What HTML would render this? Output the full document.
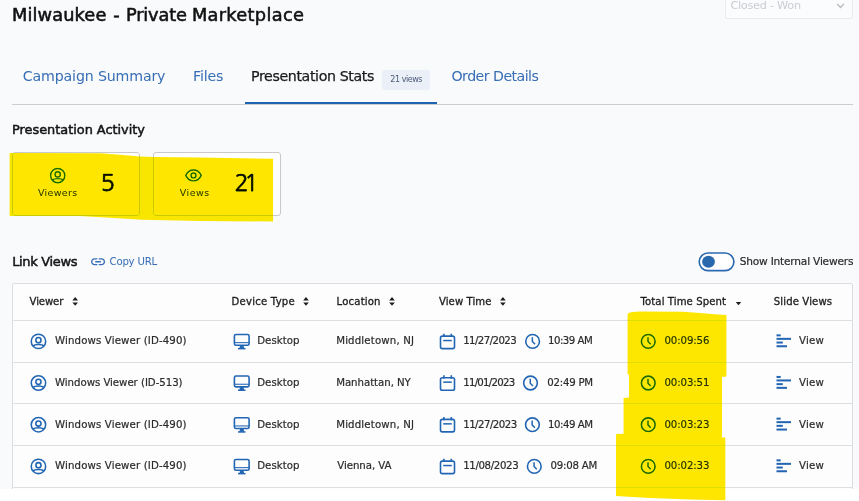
<!DOCTYPE html>
<html lang="en"><head><meta charset="utf-8"><title>Milwaukee - Private Marketplace</title>
<style>
html,body{margin:0;padding:0}
body{width:859px;height:501px;overflow:hidden;position:relative;background:#f9fafc;font-family:"DejaVu Sans","Liberation Sans",sans-serif;}
h1,h2,nav,.g{margin:0;padding:0;font-weight:normal;font-size:inherit;display:contents}
.t{position:absolute;line-height:20px;white-space:nowrap;font-weight:400}
.layer{position:absolute;left:0;top:0;pointer-events:none}
.bottom{position:absolute;left:0;top:489px;width:859px;height:13px;background:#fff}
.dd{position:absolute;left:725px;top:-6px;width:128px;height:24.5px;border:1px solid #e9ebee;border-radius:2px;background:#fbfcfe;box-sizing:border-box}
.tabline{position:absolute;left:12px;top:104px;width:841px;height:1px;background:#cbcdd1}
.tabactive{position:absolute;left:245px;top:102px;width:192px;height:2px;background:#1f64b3}
.badge{position:absolute;left:382.2px;top:70.2px;width:47.8px;height:19.5px;border-radius:2.5px;background:#ebf0f8}
.card{position:absolute;top:152px;width:128px;height:64px;border:1px solid #c9c9c9;border-radius:3px;background:#fff;box-sizing:border-box}
.tbl{position:absolute;left:12px;top:283px;width:841px;height:210px;border:1px solid #dddddf;border-radius:2px 2px 0 0;background:#fdfdfe;box-sizing:border-box}
.rl{position:absolute;left:13px;width:839px;height:1px;background:#dedfe2}
.hl{mix-blend-mode:darken}
</style></head>
<body>
<div class="dd"></div>
<span class="t" style="left:730.40px;top:-4px;font-size:11.3px;letter-spacing:-0.284px;color:#caccd0;">Closed - Won</span>
<h1><span class="t" style="left:12.00px;top:5px;font-size:17.8px;letter-spacing:0.108px;color:#111;-webkit-text-stroke:0.55px #111;">Milwaukee</span> <span class="t" style="left:113.20px;top:5px;font-size:17.8px;letter-spacing:0.000px;color:#111;-webkit-text-stroke:0.55px #111;">-</span> <span class="t" style="left:125.90px;top:5px;font-size:17.8px;letter-spacing:-0.159px;color:#111;-webkit-text-stroke:0.55px #111;">Private</span> <span class="t" style="left:191.90px;top:5px;font-size:17.8px;letter-spacing:0.308px;color:#111;-webkit-text-stroke:0.55px #111;">Marketplace</span></h1>
<div class="tabline"></div><div class="tabactive"></div>
<nav><span class="t" style="left:22.80px;top:66px;font-size:14.2px;letter-spacing:-0.162px;color:#376eb5;">Campaign Summary</span><span class="t" style="left:193.00px;top:66px;font-size:14.2px;letter-spacing:-0.185px;color:#376eb5;">Files</span><span class="t" style="left:251.00px;top:66px;font-size:14.2px;letter-spacing:-0.379px;color:#1a1a1a;-webkit-text-stroke:0.25px #1a1a1a;">Presentation Stats</span><i class="badge"></i><span class="t" style="left:390.30px;top:70px;font-size:8px;letter-spacing:-0.449px;color:#4b5a78;">21 views</span><span class="t" style="left:451.50px;top:66px;font-size:14.2px;letter-spacing:-0.552px;color:#376eb5;">Order Details</span></nav>
<h2><span class="t" style="left:12.10px;top:120px;font-size:12.9px;letter-spacing:-0.022px;color:#151515;-webkit-text-stroke:0.5px #151515;">Presentation Activity</span></h2>
<div class="card" style="left:12px"></div><div class="card" style="left:153px"></div>
<span class="t" style="left:37.90px;top:183px;font-size:9.5px;letter-spacing:0.334px;color:#333;-webkit-text-stroke:0.1px #333;">Viewers</span><span class="t" style="left:100.60px;top:172px;font-size:24px;letter-spacing:0.000px;color:#0c0c0c;-webkit-text-stroke:0.75px #0c0c0c;font-family:'NanumGothic',sans-serif;">5</span>
<span class="t" style="left:179.80px;top:183px;font-size:9.5px;letter-spacing:0.464px;color:#333;-webkit-text-stroke:0.1px #333;">Views</span><span class="t" style="left:234.40px;top:173px;font-size:23.5px;letter-spacing:-4.341px;color:#0c0c0c;-webkit-text-stroke:0.75px #0c0c0c;font-family:'NanumGothic',sans-serif;">21</span>
<h2><span class="t" style="left:12.20px;top:252px;font-size:13px;letter-spacing:-0.345px;color:#151515;-webkit-text-stroke:0.5px #151515;">Link Views</span></h2>
<span class="t" style="left:109.50px;top:252px;font-size:10.2px;letter-spacing:-0.231px;color:#376eb5;">Copy URL</span>
<span class="t" style="left:739.70px;top:251px;font-size:10.6px;letter-spacing:-0.198px;color:#2a2a2a;-webkit-text-stroke:0.2px #2a2a2a;">Show Internal Viewers</span>
<div class="tbl"></div>
<div class="rl" style="top:320px"></div>
<div class="rl" style="top:362px"></div>
<div class="rl" style="top:403px"></div>
<div class="rl" style="top:445px"></div>
<div class="rl" style="top:487px"></div>
<div class="g" role="row"><span class="t" style="left:29.60px;top:292px;font-size:10.1px;letter-spacing:-0.113px;color:#1c1c1c;-webkit-text-stroke:0.3px #1c1c1c;">Viewer</span><span class="t" style="left:231.50px;top:292px;font-size:10.1px;letter-spacing:0.230px;color:#1c1c1c;-webkit-text-stroke:0.3px #1c1c1c;">Device Type</span><span class="t" style="left:336.60px;top:292px;font-size:10.1px;letter-spacing:0.172px;color:#1c1c1c;-webkit-text-stroke:0.3px #1c1c1c;">Location</span><span class="t" style="left:439.00px;top:292px;font-size:10.1px;letter-spacing:0.068px;color:#1c1c1c;-webkit-text-stroke:0.3px #1c1c1c;">View Time</span><span class="t" style="left:640.50px;top:292px;font-size:10.1px;letter-spacing:0.092px;color:#1c1c1c;-webkit-text-stroke:0.3px #1c1c1c;">Total Time Spent</span><span class="t" style="left:773.80px;top:292px;font-size:10.1px;letter-spacing:0.121px;color:#1c1c1c;-webkit-text-stroke:0.3px #1c1c1c;">Slide Views</span></div>
<div class="g" role="row"><span class="t" style="left:55.00px;top:331px;font-size:10.2px;letter-spacing:0.140px;color:#2b2b2b;-webkit-text-stroke:0.2px #2b2b2b;">Windows Viewer (ID-490)</span><span class="t" style="left:257.20px;top:331px;font-size:10.2px;letter-spacing:0.042px;color:#2b2b2b;-webkit-text-stroke:0.2px #2b2b2b;">Desktop</span><span class="t" style="left:336.20px;top:331px;font-size:10.2px;letter-spacing:0.157px;color:#2b2b2b;-webkit-text-stroke:0.2px #2b2b2b;">Middletown, NJ</span><span class="t" style="left:463.20px;top:331px;font-size:10.2px;letter-spacing:-0.582px;color:#2b2b2b;-webkit-text-stroke:0.2px #2b2b2b;">11/27/2023</span><span class="t" style="left:548.00px;top:331px;font-size:10.2px;letter-spacing:-0.509px;color:#2b2b2b;-webkit-text-stroke:0.2px #2b2b2b;">10:39 AM</span><span class="t" style="left:664.40px;top:331px;font-size:10.2px;letter-spacing:-0.096px;color:#2b2b2b;-webkit-text-stroke:0.2px #2b2b2b;">00:09:56</span><span class="t" style="left:799.00px;top:331px;font-size:10.2px;letter-spacing:0.186px;color:#2b2b2b;-webkit-text-stroke:0.2px #2b2b2b;">View</span></div>
<div class="g" role="row"><span class="t" style="left:55.00px;top:373px;font-size:10.2px;letter-spacing:-0.042px;color:#2b2b2b;-webkit-text-stroke:0.2px #2b2b2b;">Windows Viewer (ID-513)</span><span class="t" style="left:257.20px;top:373px;font-size:10.2px;letter-spacing:0.042px;color:#2b2b2b;-webkit-text-stroke:0.2px #2b2b2b;">Desktop</span><span class="t" style="left:336.20px;top:373px;font-size:10.2px;letter-spacing:-0.048px;color:#2b2b2b;-webkit-text-stroke:0.2px #2b2b2b;">Manhattan, NY</span><span class="t" style="left:463.20px;top:373px;font-size:10.2px;letter-spacing:-0.748px;color:#2b2b2b;-webkit-text-stroke:0.2px #2b2b2b;">11/01/2023</span><span class="t" style="left:547.30px;top:373px;font-size:10.2px;letter-spacing:-0.249px;color:#2b2b2b;-webkit-text-stroke:0.2px #2b2b2b;">02:49 PM</span><span class="t" style="left:664.40px;top:373px;font-size:10.2px;letter-spacing:-0.096px;color:#2b2b2b;-webkit-text-stroke:0.2px #2b2b2b;">00:03:51</span><span class="t" style="left:799.00px;top:373px;font-size:10.2px;letter-spacing:0.186px;color:#2b2b2b;-webkit-text-stroke:0.2px #2b2b2b;">View</span></div>
<div class="g" role="row"><span class="t" style="left:55.00px;top:415px;font-size:10.2px;letter-spacing:0.140px;color:#2b2b2b;-webkit-text-stroke:0.2px #2b2b2b;">Windows Viewer (ID-490)</span><span class="t" style="left:257.20px;top:415px;font-size:10.2px;letter-spacing:0.042px;color:#2b2b2b;-webkit-text-stroke:0.2px #2b2b2b;">Desktop</span><span class="t" style="left:336.20px;top:415px;font-size:10.2px;letter-spacing:0.157px;color:#2b2b2b;-webkit-text-stroke:0.2px #2b2b2b;">Middletown, NJ</span><span class="t" style="left:463.20px;top:415px;font-size:10.2px;letter-spacing:-0.526px;color:#2b2b2b;-webkit-text-stroke:0.2px #2b2b2b;">11/27/2023</span><span class="t" style="left:548.00px;top:415px;font-size:10.2px;letter-spacing:-0.467px;color:#2b2b2b;-webkit-text-stroke:0.2px #2b2b2b;">10:49 AM</span><span class="t" style="left:664.40px;top:415px;font-size:10.2px;letter-spacing:-0.096px;color:#2b2b2b;-webkit-text-stroke:0.2px #2b2b2b;">00:03:23</span><span class="t" style="left:799.00px;top:415px;font-size:10.2px;letter-spacing:0.186px;color:#2b2b2b;-webkit-text-stroke:0.2px #2b2b2b;">View</span></div>
<div class="g" role="row"><span class="t" style="left:55.00px;top:456px;font-size:10.2px;letter-spacing:0.140px;color:#2b2b2b;-webkit-text-stroke:0.2px #2b2b2b;">Windows Viewer (ID-490)</span><span class="t" style="left:257.20px;top:456px;font-size:10.2px;letter-spacing:0.042px;color:#2b2b2b;-webkit-text-stroke:0.2px #2b2b2b;">Desktop</span><span class="t" style="left:337.20px;top:456px;font-size:10.2px;letter-spacing:-0.044px;color:#2b2b2b;-webkit-text-stroke:0.2px #2b2b2b;">Vienna, VA</span><span class="t" style="left:463.20px;top:456px;font-size:10.2px;letter-spacing:-0.360px;color:#2b2b2b;-webkit-text-stroke:0.2px #2b2b2b;">11/08/2023</span><span class="t" style="left:550.40px;top:456px;font-size:10.2px;letter-spacing:-0.209px;color:#2b2b2b;-webkit-text-stroke:0.2px #2b2b2b;">09:08 AM</span><span class="t" style="left:664.40px;top:456px;font-size:10.2px;letter-spacing:-0.096px;color:#2b2b2b;-webkit-text-stroke:0.2px #2b2b2b;">00:02:33</span><span class="t" style="left:799.00px;top:456px;font-size:10.2px;letter-spacing:0.186px;color:#2b2b2b;-webkit-text-stroke:0.2px #2b2b2b;">View</span></div>
<div class="bottom"></div>
<svg class="layer" width="859" height="501" viewBox="0 0 859 501">
<g transform="translate(840.50 5.90)" fill="none" stroke="#b4b7bc" stroke-width="1.25"><path d="M-3.4 -2L0 1.6L3.4 -2"/></g>
<g transform="translate(57.70 175.60)" fill="none" stroke="#2266b3" stroke-width="1.45"><circle r="7.1"/><circle cy="-1.2" r="2.6"/><path d="M-5.3 4.6C-3.7 2.5 3.7 2.5 5.3 4.6"/></g>
<g transform="translate(193.50 175.40)" fill="none" stroke="#2266b3" stroke-width="1.45"><path d="M-7.7 0C-5.6 -4.8 -2.6 -5.45 0 -5.45S5.6 -4.8 7.7 0C5.6 4.8 2.6 5.45 0 5.45S-5.6 4.8 -7.7 0Z"/><circle r="2.45"/></g>
<g transform="translate(89.6 253.3) scale(0.705)" fill="#376eb5"><path d="M3.9 12c0-1.710 1.390-3.100 3.100-3.100h4V7H7c-2.760 0-5 2.240-5 5s2.240 5 5 5h4v-1.900H7c-1.710 0-3.100-1.390-3.100-3.100zM8 13h8v-2H8v2zm9-6h-4v1.900h4c1.710 0 3.100 1.390 3.100 3.100s-1.390 3.100-3.100 3.100h-4V17h4c2.760 0 5-2.240 5-5s-2.240-5-5-5z"/></g>
<rect x="699.2" y="252.95" width="34.7" height="17.7" rx="8.85" fill="#fff" stroke="#2a69af" stroke-width="1.65"/><ellipse cx="708.5" cy="261.8" rx="6.4" ry="5.95" fill="#2a68ad"/>
<g transform="translate(75.20 0.00)" fill="#1c1c1c"><path d="M0 297.1L2.8 300.4H-2.8Z"/><path d="M-2.8 302.5H2.8L0 305.7Z"/></g>
<g transform="translate(306.00 0.00)" fill="#1c1c1c"><path d="M0 297.1L2.8 300.4H-2.8Z"/><path d="M-2.8 302.5H2.8L0 305.7Z"/></g>
<g transform="translate(392.00 0.00)" fill="#1c1c1c"><path d="M0 297.1L2.8 300.4H-2.8Z"/><path d="M-2.8 302.5H2.8L0 305.7Z"/></g>
<g transform="translate(502.90 0.00)" fill="#1c1c1c"><path d="M0 297.1L2.8 300.4H-2.8Z"/><path d="M-2.8 302.5H2.8L0 305.7Z"/></g>
<g transform="translate(738.50 0.00)" fill="#1c1c1c"><path d="M-2.7 302.1H2.7L0 305.2Z"/></g>
<g transform="translate(38.45 341.40)" fill="none" stroke="#2266b3" stroke-width="1.55"><circle r="7.2"/><circle cy="-1.2" r="2.6"/><path d="M-5.3 4.6C-3.7 2.5 3.7 2.5 5.3 4.6"/></g>
<g transform="translate(241.75 341.40)" fill="none" stroke="#2266b3" color="#2266b3" stroke-width="1.6"><rect x="-7.35" y="-6.95" width="14.7" height="10.8" rx="1.6"/><path d="M-7.3 1.25H7.3" stroke-width="1.05"/><path d="M-1.2 4.3L-1.7 6.6H1.7L1.2 4.3Z" stroke-width="1.1" fill="currentColor"/><path d="M-3.75 7.25H3.75" stroke-width="1.5"/></g>
<g transform="translate(447.50 341.65)" fill="none" stroke="#2266b3" stroke-width="1.6"><rect x="-7.0" y="-5.55" width="14.0" height="12.5" rx="1.8"/><path d="M-3.6 -8V-4.6M3.8 -8V-4.6" stroke-width="1.6"/><path d="M-4.3 -1.1H4.3" stroke-width="1.5"/></g>
<g transform="translate(532.60 341.40)" fill="none" stroke="#2266b3" stroke-width="1.6"><circle r="6.85"/><path d="M-0.25 -4.2V0.15L2.45 2.95" stroke-width="1.5"/></g>
<g transform="translate(648.25 341.40)" fill="none" stroke="#2266b3" stroke-width="1.6"><circle r="6.85"/><path d="M-0.25 -4.2V0.15L2.45 2.95" stroke-width="1.5"/></g>
<g transform="translate(776.50 341.40)" fill="#2266b3"><rect y="-7.05" width="4.2" height="2"/><rect y="-3.55" width="14.5" height="2"/><rect y="0.15" width="6.3" height="2"/><rect y="3.85" width="10.5" height="2"/></g>
<g transform="translate(38.45 383.00)" fill="none" stroke="#2266b3" stroke-width="1.55"><circle r="7.2"/><circle cy="-1.2" r="2.6"/><path d="M-5.3 4.6C-3.7 2.5 3.7 2.5 5.3 4.6"/></g>
<g transform="translate(241.75 383.00)" fill="none" stroke="#2266b3" color="#2266b3" stroke-width="1.6"><rect x="-7.35" y="-6.95" width="14.7" height="10.8" rx="1.6"/><path d="M-7.3 1.25H7.3" stroke-width="1.05"/><path d="M-1.2 4.3L-1.7 6.6H1.7L1.2 4.3Z" stroke-width="1.1" fill="currentColor"/><path d="M-3.75 7.25H3.75" stroke-width="1.5"/></g>
<g transform="translate(447.50 383.25)" fill="none" stroke="#2266b3" stroke-width="1.6"><rect x="-7.0" y="-5.55" width="14.0" height="12.5" rx="1.8"/><path d="M-3.6 -8V-4.6M3.8 -8V-4.6" stroke-width="1.6"/><path d="M-4.3 -1.1H4.3" stroke-width="1.5"/></g>
<g transform="translate(530.50 383.00)" fill="none" stroke="#2266b3" stroke-width="1.6"><circle r="6.85"/><path d="M-0.25 -4.2V0.15L2.45 2.95" stroke-width="1.5"/></g>
<g transform="translate(648.25 383.00)" fill="none" stroke="#2266b3" stroke-width="1.6"><circle r="6.85"/><path d="M-0.25 -4.2V0.15L2.45 2.95" stroke-width="1.5"/></g>
<g transform="translate(776.50 383.00)" fill="#2266b3"><rect y="-7.05" width="4.2" height="2"/><rect y="-3.55" width="14.5" height="2"/><rect y="0.15" width="6.3" height="2"/><rect y="3.85" width="10.5" height="2"/></g>
<g transform="translate(38.45 424.70)" fill="none" stroke="#2266b3" stroke-width="1.55"><circle r="7.2"/><circle cy="-1.2" r="2.6"/><path d="M-5.3 4.6C-3.7 2.5 3.7 2.5 5.3 4.6"/></g>
<g transform="translate(241.75 424.70)" fill="none" stroke="#2266b3" color="#2266b3" stroke-width="1.6"><rect x="-7.35" y="-6.95" width="14.7" height="10.8" rx="1.6"/><path d="M-7.3 1.25H7.3" stroke-width="1.05"/><path d="M-1.2 4.3L-1.7 6.6H1.7L1.2 4.3Z" stroke-width="1.1" fill="currentColor"/><path d="M-3.75 7.25H3.75" stroke-width="1.5"/></g>
<g transform="translate(447.50 424.95)" fill="none" stroke="#2266b3" stroke-width="1.6"><rect x="-7.0" y="-5.55" width="14.0" height="12.5" rx="1.8"/><path d="M-3.6 -8V-4.6M3.8 -8V-4.6" stroke-width="1.6"/><path d="M-4.3 -1.1H4.3" stroke-width="1.5"/></g>
<g transform="translate(532.40 424.70)" fill="none" stroke="#2266b3" stroke-width="1.6"><circle r="6.85"/><path d="M-0.25 -4.2V0.15L2.45 2.95" stroke-width="1.5"/></g>
<g transform="translate(648.25 424.70)" fill="none" stroke="#2266b3" stroke-width="1.6"><circle r="6.85"/><path d="M-0.25 -4.2V0.15L2.45 2.95" stroke-width="1.5"/></g>
<g transform="translate(776.50 424.70)" fill="#2266b3"><rect y="-7.05" width="4.2" height="2"/><rect y="-3.55" width="14.5" height="2"/><rect y="0.15" width="6.3" height="2"/><rect y="3.85" width="10.5" height="2"/></g>
<g transform="translate(38.45 466.40)" fill="none" stroke="#2266b3" stroke-width="1.55"><circle r="7.2"/><circle cy="-1.2" r="2.6"/><path d="M-5.3 4.6C-3.7 2.5 3.7 2.5 5.3 4.6"/></g>
<g transform="translate(241.75 466.40)" fill="none" stroke="#2266b3" color="#2266b3" stroke-width="1.6"><rect x="-7.35" y="-6.95" width="14.7" height="10.8" rx="1.6"/><path d="M-7.3 1.25H7.3" stroke-width="1.05"/><path d="M-1.2 4.3L-1.7 6.6H1.7L1.2 4.3Z" stroke-width="1.1" fill="currentColor"/><path d="M-3.75 7.25H3.75" stroke-width="1.5"/></g>
<g transform="translate(447.50 466.65)" fill="none" stroke="#2266b3" stroke-width="1.6"><rect x="-7.0" y="-5.55" width="14.0" height="12.5" rx="1.8"/><path d="M-3.6 -8V-4.6M3.8 -8V-4.6" stroke-width="1.6"/><path d="M-4.3 -1.1H4.3" stroke-width="1.5"/></g>
<g transform="translate(534.30 466.40)" fill="none" stroke="#2266b3" stroke-width="1.6"><circle r="6.85"/><path d="M-0.25 -4.2V0.15L2.45 2.95" stroke-width="1.5"/></g>
<g transform="translate(648.25 466.40)" fill="none" stroke="#2266b3" stroke-width="1.6"><circle r="6.85"/><path d="M-0.25 -4.2V0.15L2.45 2.95" stroke-width="1.5"/></g>
<g transform="translate(776.50 466.40)" fill="#2266b3"><rect y="-7.05" width="4.2" height="2"/><rect y="-3.55" width="14.5" height="2"/><rect y="0.15" width="6.3" height="2"/><rect y="3.85" width="10.5" height="2"/></g>
</svg>
<svg class="layer hl" width="859" height="501" viewBox="0 0 859 501">
<g fill="#ffe600">
<polygon points="9.6,153.1 100,153.3 120,154.7 140,156.5 153,156.9 200,157.6 273.1,158.7 273.1,221.5 200,221 142,219.8 110,217.8 80,216.1 9.6,216"/>
<polygon points="627.6,314 629,312.8 633,312 640,311.6 683,311.7 700,313 715,314.2 726.4,314.9 726.4,376.6 722,377 722,437.4 725.3,437.6 725.3,500.2 690,499.4 650,497.9 616,496 616,434 623.6,433.8 623.6,398 629,397.6 629,374.6 627.6,374.6"/>
</g></svg>
</body></html>
